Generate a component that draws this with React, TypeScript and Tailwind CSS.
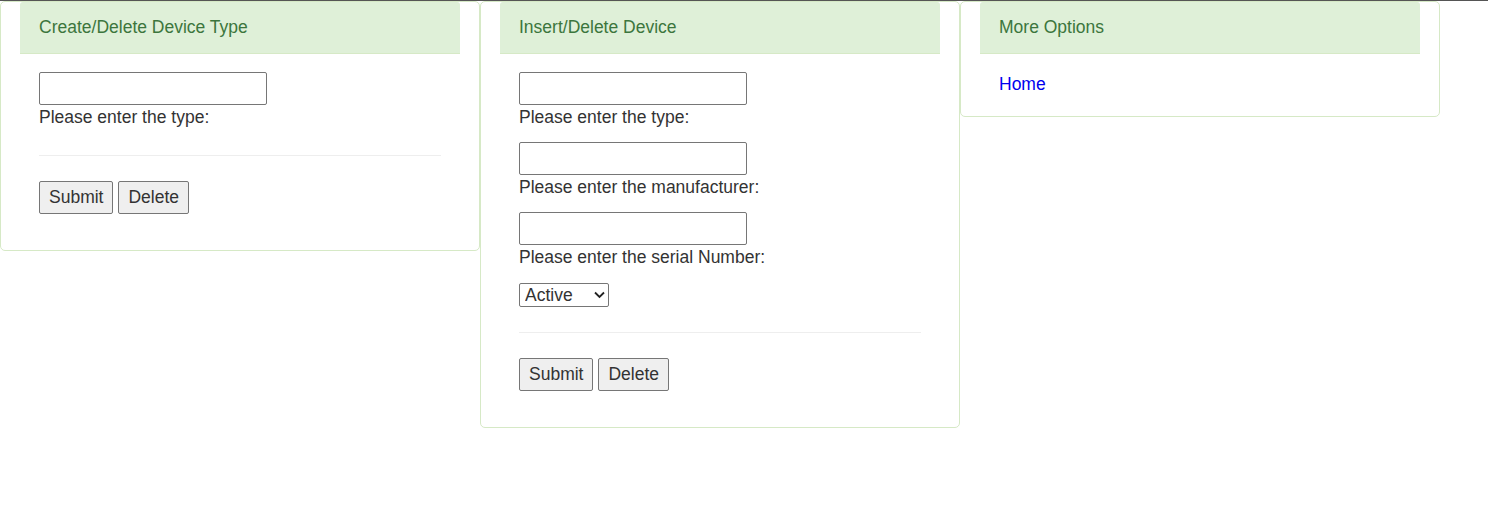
import type { ReactNode } from 'react';

const font = { fontFamily: '"Liberation Sans", Arial, sans-serif' };

function Panel({ title, children, last }: { title: string; children: ReactNode; last?: boolean }) {
  return (
    <div className="w-[480px] self-start border border-[#d6e9c6] rounded-[5px] bg-white">
      <div className="mx-[19px] h-[52px] flex items-center px-[19px] bg-[#dff0d8] border-b border-[#d6e9c6] text-[#3c763d] rounded-t-[3px]">
        {title}
      </div>
      <div className={last ? 'px-[38px] pt-[18px] pb-[19px]' : 'px-[38px] pt-[18px] pb-[18px]'}>{children}</div>
    </div>
  );
}

function Field({ label }: { label: string }) {
  return (
    <div className="flex flex-col items-start">
      <input
        type="text"
        className="w-[228px] h-[33px] border border-[#767676] rounded-[2px] bg-white px-1 outline-none"
      />
      <label className="leading-[25px]">{label}</label>
    </div>
  );
}

function Actions() {
  return (
    <>
      <hr className="mt-[25px] mb-[25px] border-0 border-t border-[#eeeeee]" />
      <div className="flex gap-[5px] pb-[18px]">
        <button className="h-[33px] px-[9px] border border-[#767676] rounded-[2px] bg-[#efefef] text-[#333]">
          Submit
        </button>
        <button className="h-[33px] px-[9px] border border-[#767676] rounded-[2px] bg-[#efefef] text-[#333]">
          Delete
        </button>
      </div>
    </>
  );
}

export default function App() {
  return (
    <div className="min-h-[513px] bg-white text-[#333] text-[17.5px] leading-[25px]" style={font}>
      <div className="h-px bg-[#555555]" />
      <div className="flex items-start">
        <Panel title="Create/Delete Device Type">
          <Field label="Please enter the type:" />
          <Actions />
        </Panel>

        <Panel title="Insert/Delete Device">
          <div className="flex flex-col gap-[12px]">
            <Field label="Please enter the type:" />
            <Field label="Please enter the manufacturer:" />
            <Field label="Please enter the serial Number:" />
            <div className="relative w-[90px] mt-[1px] -mb-[1px]">
              <select
                defaultValue="Active"
                className="appearance-none w-[90px] h-[24px] border border-[#767676] rounded-[2px] bg-white pl-[5px] text-[17.5px] leading-[20px] outline-none"
              >
                <option>Active</option>
                <option>Inactive</option>
              </select>
              <svg
                className="absolute right-[4px] top-[8px] pointer-events-none"
                width="11"
                height="8"
                viewBox="0 0 11 8"
                fill="none"
                stroke="#222"
                strokeWidth="1.8"
              >
                <path d="M1 1.5 L5.5 6 L10 1.5" />
              </svg>
            </div>
          </div>
          <Actions />
        </Panel>

        <Panel title="More Options" last>
          <a href="#" className="text-[#0000ee] leading-[25px]">
            Home
          </a>
        </Panel>
      </div>
    </div>
  );
}
